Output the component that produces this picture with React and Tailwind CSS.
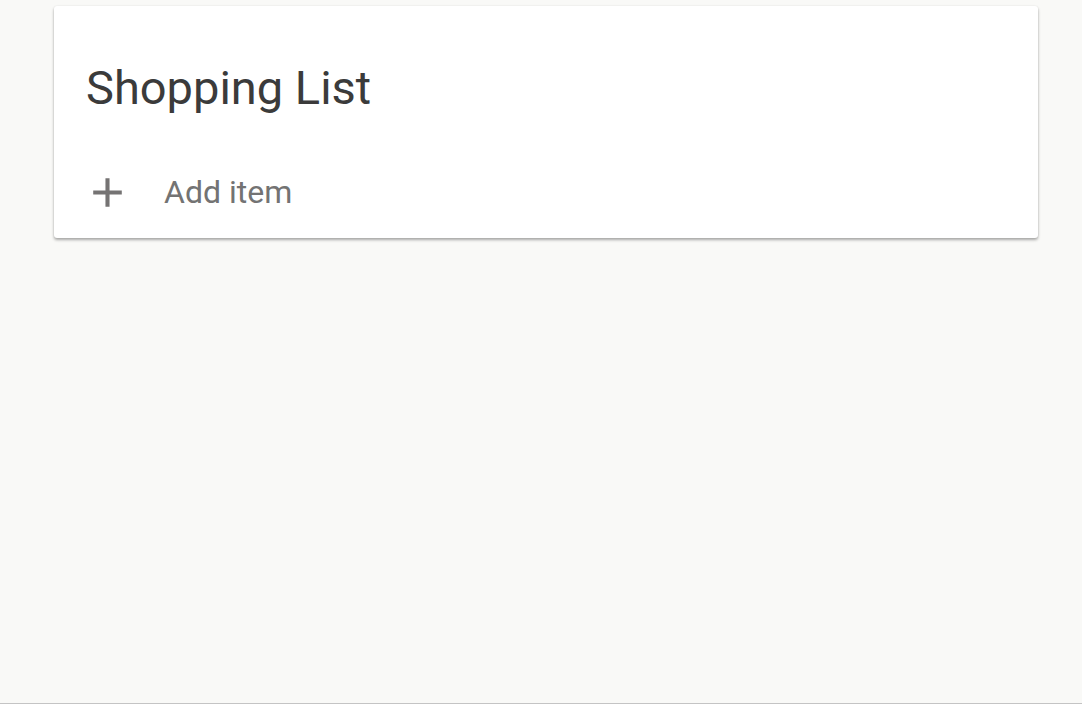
import React from "react";

export default function App() {
  return (
    <div className="w-[1082px] h-[704px] bg-[#f9f9f7] flex flex-col" style={{ fontFamily: "Roboto, 'Noto Sans', sans-serif" }}>
      <div className="flex-1 pt-[6px] pl-[54px]">
        <div className="w-[984px] h-[232px] bg-white rounded-[3px] shadow-[0_2px_3px_rgba(0,0,0,0.32),0_0_2px_rgba(0,0,0,0.08)] flex flex-col">
          <div className="pl-[32px] pt-[54px] h-[162px]">
            <h1 className="text-[47px] leading-[56px] text-[#3b3b3b] font-normal">Shopping List</h1>
          </div>
          <div className="flex items-center h-[48px] pl-[29px]">
            <svg width="49" height="49" viewBox="0 0 24 24" className="shrink-0">
              <path d="M19 13h-6v6h-2v-6H5v-2h6V5h2v6h6v2z" fill="#757373" />
            </svg>
            <span className="ml-[32px] text-[32px] leading-[48px] text-[#737373]">Add item</span>
          </div>
        </div>
      </div>
      <div className="h-px bg-[#c4c4c4]" />
    </div>
  );
}
